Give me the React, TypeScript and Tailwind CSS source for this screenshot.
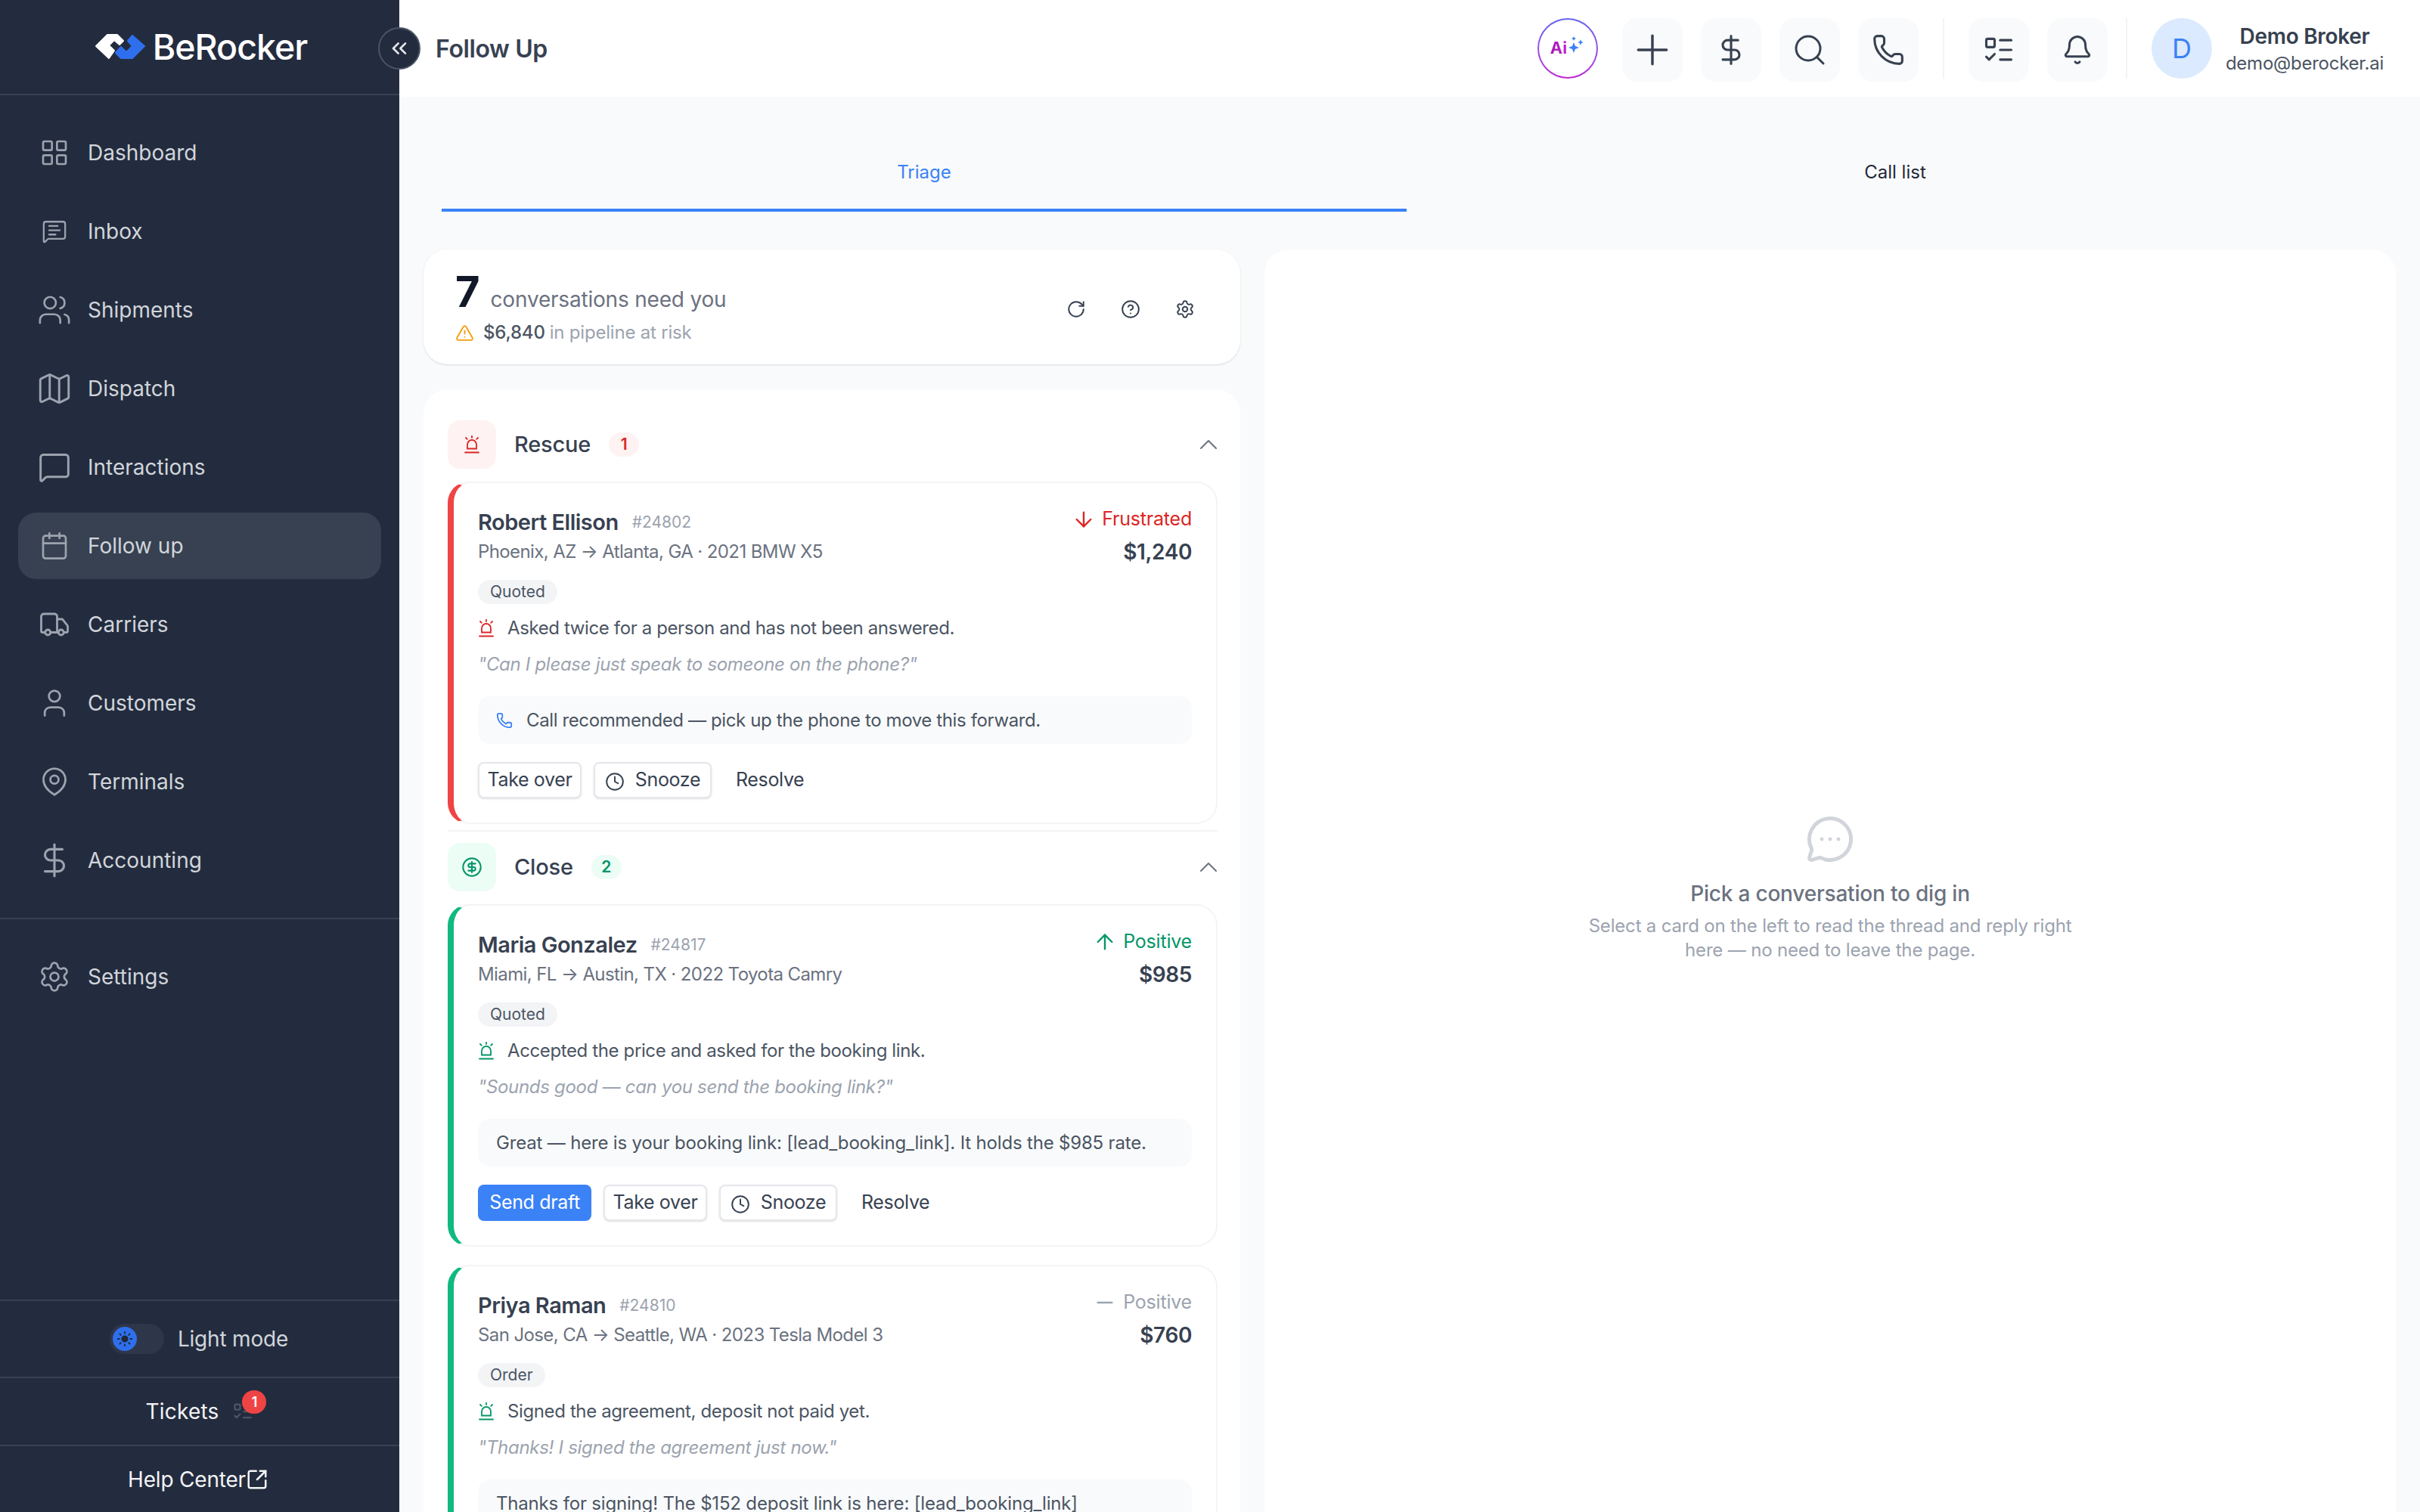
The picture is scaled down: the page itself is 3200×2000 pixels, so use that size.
import {
  AlertTriangle, ArrowDown, ArrowUp, Bell, Calendar, ChevronUp, ChevronsLeft, CircleDollarSign, CircleHelp, Clock,
  DollarSign, LayoutGrid, ListTodo, Map, MessageCircleMore, MessageSquare, MessageSquareText, Minus, Phone,
  Plus, RotateCw, Search, Settings, SquareArrowOutUpRight, Sun, Truck, User, Users,
} from 'lucide-react';

const PinIcon = ({ size }: { size: number; strokeWidth?: number; className?: string }) => (
  <svg width={size} height={size} viewBox="0 0 40 44" fill="none" stroke="currentColor" strokeWidth="3" className="text-[#9ca3af]">
    <path d="M20 41 C15 38 4 30 4 19 A16 16 0 0 1 36 19 C36 30 25 38 20 41 Z" strokeLinejoin="round" />
    <circle cx="20" cy="19" r="6" />
  </svg>
);

const navItems = [
  { label: 'Dashboard', icon: LayoutGrid, size: 40, sw: 1.6 },
  { label: 'Inbox', icon: MessageSquareText, size: 34, sw: 1.6 },
  { label: 'Shipments', icon: Users, size: 46, sw: 1.4 },
  { label: 'Dispatch', icon: Map, size: 50, sw: 1.4 },
  { label: 'Interactions', icon: MessageSquare, size: 44, sw: 1.6 },
  { label: 'Follow up', icon: Calendar, size: 40, sw: 1.6, active: true },
  { label: 'Carriers', icon: Truck, size: 42, sw: 1.6 },
  { label: 'Customers', icon: User, size: 44, sw: 1.5 },
  { label: 'Terminals', icon: PinIcon, size: 40, sw: 1.5 },
  { label: 'Accounting', icon: DollarSign, size: 50, sw: 1.5 },
];

const SirenIcon = ({ className }: { className: string }) => (
  <svg width="20" height="24" viewBox="0 0 20 24" fill="none" stroke="currentColor" strokeWidth="1.8" strokeLinecap="round" className={className}>
    <path d="M10 0.8 V3" />
    <path d="M2 3 L3.8 4.8" />
    <path d="M18 3 L16.2 4.8" />
    <path d="M4 17.5 V12 a6 6 0 0 1 12 0 V17.5 Z" />
    <path d="M1 22.5 H19" />
  </svg>
);

const Logo = () => (
  <svg width="84" height="52" viewBox="0 0 84 52">
    <path d="M9 25 L24 10 H37 L45 18 L40 23 L33 17 L26 24 L33 31 L26 41 Z" fill="#fff" stroke="#fff" strokeWidth="2" strokeLinejoin="round" />
    <path d="M35 34 L42 26 L49 33 L57 25 L51 18 L57 11 L73 25 L57 41 H42 Z" fill="#2f6fed" stroke="#2f6fed" strokeWidth="2" strokeLinejoin="round" />
  </svg>
);

const Sidebar = () => (
  <aside className="relative flex h-full w-[528px] shrink-0 flex-col bg-[#232c3e]">
    <div className="flex h-[126px] items-center justify-center border-b-2 border-[#374151] pr-1">
      <Logo />
      <span className="mt-[2px] text-[46.5px] font-medium tracking-[-1px] text-white">BeRocker</span>
    </div>
    <nav className="flex flex-col gap-4 px-6 pt-8 pb-8">
      {navItems.map((item) => (
        <div key={item.label} className={`flex h-[88px] items-center gap-6 rounded-3xl pl-7 ${item.active ? 'bg-[#374151]' : ''}`}>
          <span className="flex w-10 justify-center">
            <item.icon size={item.size} strokeWidth={item.sw} className="shrink-0 text-[#9ca3af]" />
          </span>
          <span className="text-[28px] text-[#d1d5db]">{item.label}</span>
        </div>
      ))}
    </nav>
    <div className="border-t-2 border-[#374151] px-6 pt-8">
      <div className="flex h-[88px] items-center gap-6 pl-7">
        <span className="flex w-10 justify-center">
          <Settings size={44} strokeWidth={1.5} className="shrink-0 text-[#9ca3af]" />
        </span>
        <span className="text-[28px] text-[#d1d5db]">Settings</span>
      </div>
    </div>
    <div className="mt-auto text-[28px]">
      <div className="flex h-[102px] items-center justify-center gap-[18px] border-t-2 border-[#374151] pr-[2px]">
        <div className="flex h-10 w-[72px] items-center rounded-full bg-[#2e3749] px-1">
          <span className="flex h-8 w-8 items-center justify-center rounded-full bg-[#2f6fed]">
            <Sun size={22} className="fill-[#1f2937] text-[#1f2937]" />
          </span>
        </div>
        <span className="tracking-[-0.2px] text-[#d1d5db]">Light mode</span>
      </div>
      <div className="flex h-[90px] items-center justify-center gap-[18px] border-t-2 border-[#374151]">
        <span className="tracking-[0.2px] text-[#f3f4f6]">Tickets</span>
        <span className="relative">
          <ListTodo size={28} className="text-[#4b5563]" />
          <span className="absolute -top-[14px] left-[13px] flex h-[31px] w-[32px] items-center justify-center rounded-full bg-[#ef4444] text-[18px] font-semibold text-white">1</span>
        </span>
      </div>
      <div className="flex h-[89px] items-center justify-center border-t-2 border-[#374151] pr-1">
        <span className="tracking-[-0.2px] text-[#f3f4f6]">Help Center</span>
        <SquareArrowOutUpRight size={30} className="text-[#f3f4f6]" />
      </div>
    </div>
  </aside>
);

const IconButton = ({ icon: Icon, size = 44, sw = 1.7 }: { icon: typeof Plus; size?: number; sw?: number }) => (
  <div className="flex h-[84px] w-20 items-center justify-center rounded-[20px] bg-[#f9fafb]">
    <Icon size={size} className="text-[#374151]" strokeWidth={sw} />
  </div>
);

const AiButton = () => (
  <div className="h-20 w-20 rounded-full bg-gradient-to-b from-[#6366f1] to-[#c026d3] p-[2px]">
    <div className="flex h-full w-full items-center justify-center rounded-full bg-white pb-[2px]">
      <span className="bg-gradient-to-r from-[#a21caf] to-[#c026d3] bg-clip-text text-[22px] font-bold text-transparent">Ai</span>
      <svg width="24" height="26" viewBox="0 0 24 26" className="-mt-2 fill-[#3b82f6]">
        <path d="M9 10 L11 15 L16 17 L11 19 L9 24 L7 19 L2 17 L7 15 Z" />
        <path d="M18 6 L19.2 9 L22 10 L19.2 11 L18 14 L16.8 11 L14 10 L16.8 9 Z" />
        <path d="M9 2 L10 4 L12 5 L10 6 L9 8 L8 6 L6 5 L8 4 Z" />
      </svg>
    </div>
  </div>
);

const Header = () => (
  <header className="flex h-[128px] shrink-0 items-start bg-white pt-6 pr-12">
    <h1 className="mt-[17px] ml-12 text-[32px] font-semibold tracking-[-0.4px] text-[#374151]">Follow Up</h1>
    <div className="ml-auto flex items-start">
      <AiButton />
      <div className="ml-8 flex gap-6">
        <IconButton icon={Plus} size={64} sw={1.3} />
        <IconButton icon={DollarSign} />
        <IconButton icon={Search} size={48} sw={1.5} />
        <IconButton icon={Phone} />
      </div>
      <div className="mx-8 h-20 w-[2px] bg-[#f3f4f6]" />
      <div className="flex gap-6">
        <IconButton icon={ListTodo} />
        <IconButton icon={Bell} size={42} />
      </div>
      <div className="mr-8 ml-6 h-20 w-[2px] bg-[#f3f4f6]" />
      <div className="flex h-20 w-20 items-center justify-center rounded-full bg-[#dbeafe] text-[36px] text-[#3b82f6]">D</div>
      <div className="ml-[18px] flex flex-col items-center">
        <span className="text-[28px] leading-[48px] font-semibold tracking-[-0.3px] text-[#374151]">Demo Broker</span>
        <span className="-mt-[6px] text-[24px] leading-[36px] tracking-[-0.25px] text-[#4b5563]">demo@berocker.ai</span>
      </div>
    </div>
  </header>
);

type CardProps = {
  accent: 'red' | 'green';
  name: string;
  id: string;
  route: string;
  mood: 'down' | 'up' | 'flat';
  moodLabel: string;
  price: string;
  stage: string;
  reason: string;
  quote: string;
  note: string;
  noteIcon?: boolean;
  draft?: boolean;
};

const Card = (c: CardProps) => (
  <div className={`rounded-[28px] border-2 border-l-8 border-[#f3f4f6] bg-white px-8 pt-[32px] pb-8 ${c.accent === 'red' ? 'border-l-[#ef4444]' : 'border-l-[#10b981]'}`}>
    <div className="flex justify-between">
      <div>
        <div className="flex h-10 items-center gap-[18px]">
          <span className="text-[29px] font-semibold tracking-[-0.5px] text-[#374151]">{c.name}</span>
          <span className="text-[21px] text-[#9ca3af]">{c.id}</span>
        </div>
        <div className="-mt-[1px] h-10 text-[24px] leading-10 tracking-[-0.6px] text-[#6b7280]">{c.route}</div>
      </div>
      <div className="flex flex-col items-end">
        <div className={`-mt-[4px] flex h-10 items-center gap-2 text-[25px] tracking-[-0.2px] ${c.mood === 'down' ? 'text-[#dc2626]' : c.mood === 'up' ? 'text-[#059669]' : 'text-[#9ca3af]'}`}>
          {c.mood === 'down' && <ArrowDown size={32} strokeWidth={1.8} />}
          {c.mood === 'up' && <ArrowUp size={32} strokeWidth={1.8} />}
          {c.mood === 'flat' && <Minus size={32} strokeWidth={1.8} />}
          {c.moodLabel}
        </div>
        <div className="mt-[3px] text-[28px] leading-10 font-semibold tracking-[-0.4px] text-[#374151]">{c.price}</div>
      </div>
    </div>
    <div className="mt-[17px] flex">
      <span className="flex h-8 items-center rounded-full bg-[#f3f4f6] px-4 text-[21px] text-[#4b5563]">{c.stage}</span>
    </div>
    <div className="mt-[12px] flex h-10 items-center gap-[18px] text-[24px] tracking-[-0.38px] text-[#4b5563]">
      <SirenIcon className={`ml-[1px] ${c.accent === 'red' ? 'text-[#dc2626]' : 'text-[#059669]'}`} />
      {c.reason}
    </div>
    <div className="mt-2 h-10 text-[24px] leading-10 tracking-[-0.3px] text-[#9ca3af] italic">{c.quote}</div>
    <div className={`mt-[22px] flex h-[63px] items-center gap-[18px] rounded-2xl bg-[#f9fafb] px-6 text-[24px] whitespace-nowrap text-[#4b5563] ${c.noteIcon ? 'tracking-[-0.38px]' : 'tracking-[-0.18px]'}`}>
      {c.noteIcon && <Phone size={22} className="text-[#3b82f6]" />}
      {c.note}
    </div>
    <div className="mt-6 flex h-12 items-center gap-4 text-[25px] tracking-[-0.35px] text-[#374151]">
      {c.draft && <span className="flex h-12 w-[150px] items-center justify-center rounded-lg bg-[#3b82f6] text-white">Send draft</span>}
      <span className="flex h-12 w-[137px] items-center justify-center rounded-lg border-2 border-[#e5e7eb] bg-white shadow-sm">Take over</span>
      <span className="flex h-12 w-[156px] items-center justify-center gap-[14px] rounded-lg border-2 border-[#e5e7eb] bg-white shadow-sm">
        <Clock size={26} strokeWidth={1.8} className="mt-1" />
        Snooze
      </span>
      <span className="ml-4">Resolve</span>
    </div>
  </div>
);

const GroupHeader = ({ label, count, accent }: { label: string; count: number; accent: 'red' | 'green' }) => (
  <div className="flex h-16 items-center">
    <div className={`flex h-16 w-16 items-center justify-center rounded-2xl ${accent === 'red' ? 'bg-[#fef2f2]' : 'bg-[#ecfdf5]'}`}>
      {accent === 'red' ? <SirenIcon className="text-[#dc2626]" /> : <CircleDollarSign size={28} strokeWidth={1.8} className="text-[#059669]" />}
    </div>
    <span className="ml-6 text-[29px] font-medium tracking-[-0.2px] text-[#374151]">{label}</span>
    <span className={`ml-6 flex h-8 w-10 items-center justify-center rounded-full text-[21px] font-semibold ${accent === 'red' ? 'bg-[#fef2f2] text-[#dc2626]' : 'bg-[#ecfdf5] text-[#059669]'}`}>{count}</span>
    <ChevronUp size={40} strokeWidth={1.2} className="-mr-2 ml-auto text-[#6b7280]" />
  </div>
);

const LeftColumn = () => (
  <div className="flex w-[1080px] shrink-0 flex-col gap-[33px]">
    <div className="flex h-[152px] items-center justify-between rounded-[32px] bg-white pr-[49px] pl-[42px] shadow-sm">
      <div>
        <div className="flex items-baseline gap-[14px]">
          <span className="text-[56px] leading-[64px] font-bold text-[#111827]">7</span>
          <span className="text-[28px] tracking-[-0.2px] text-[#6b7280]">conversations need you</span>
        </div>
        <div className="mt-1 flex items-center gap-3 text-[24px] tracking-[-0.2px]">
          <AlertTriangle size={25} strokeWidth={1.8} className="text-[#f59e0b]" />
          <span className="font-medium text-[#4b5563]">$6,840</span>
          <span className="-ml-[6px] text-[#9ca3af]">in pipeline at risk</span>
        </div>
      </div>
      <div className="flex gap-6 pt-[6px] text-[#374151]">
        <span className="flex w-12 justify-center"><RotateCw size={26} strokeWidth={1.8} /></span>
        <span className="flex w-12 justify-center"><CircleHelp size={26} strokeWidth={1.8} /></span>
        <span className="flex w-12 justify-center"><Settings size={26} strokeWidth={1.8} /></span>
      </div>
    </div>
    <div className="rounded-t-[32px] bg-white pt-[41px] pr-[30px] pl-8">
      <GroupHeader label="Rescue" count={1} accent="red" />
      <div className="mt-[17px]">
        <Card
          accent="red"
          name="Robert Ellison"
          id="#24802"
          route="Phoenix, AZ → Atlanta, GA · 2021 BMW X5"
          mood="down"
          moodLabel="Frustrated"
          price="$1,240"
          stage="Quoted"
          reason="Asked twice for a person and has not been answered."
          quote={'"Can I please just speak to someone on the phone?"'}
          note="Call recommended — pick up the phone to move this forward."
          noteIcon
        />
      </div>
      <div className="mt-2 h-[2px] bg-[#f3f4f6]" />
      <div className="mt-[15px]">
        <GroupHeader label="Close" count={2} accent="green" />
      </div>
      <div className="mt-[17px] flex flex-col gap-6">
        <Card
          accent="green"
          name="Maria Gonzalez"
          id="#24817"
          route="Miami, FL → Austin, TX · 2022 Toyota Camry"
          mood="up"
          moodLabel="Positive"
          price="$985"
          stage="Quoted"
          reason="Accepted the price and asked for the booking link."
          quote={'"Sounds good — can you send the booking link?"'}
          note="Great — here is your booking link: [lead_booking_link]. It holds the $985 rate."
          draft
        />
        <Card
          accent="green"
          name="Priya Raman"
          id="#24810"
          route="San Jose, CA → Seattle, WA · 2023 Tesla Model 3"
          mood="flat"
          moodLabel="Positive"
          price="$760"
          stage="Order"
          reason="Signed the agreement, deposit not paid yet."
          quote={'"Thanks! I signed the agreement just now."'}
          note="Thanks for signing! The $152 deposit link is here: [lead_booking_link]"
          draft
        />
      </div>
    </div>
  </div>
);

const EmptyPanel = () => (
  <div className="flex h-[1690px] flex-1 flex-col items-center justify-center rounded-t-[32px] bg-white text-center">
    <MessageCircleMore size={66} strokeWidth={1.8} className="text-[#d1d5db]" />
    <div className="mt-[18px] text-[28px] font-medium tracking-[-0.2px] text-[#6b7280]">Pick a conversation to dig in</div>
    <div className="mt-[6px] w-[680px] text-[24px] leading-8 tracking-[-0.18px] text-[#9ca3af]">
      Select a card on the left to read the thread and reply right here — no need to leave the page.
    </div>
  </div>
);

export default function App() {
  return (
    <div className="relative flex h-screen w-screen overflow-hidden bg-[#f9fafb] font-['Inter',sans-serif]">
      <Sidebar />
      <button className="absolute top-9 left-[500px] flex h-14 w-14 items-center justify-center rounded-full border-2 border-[#4b5563] bg-[#232c3e] text-[#e5e7eb]">
        <ChevronsLeft size={32} />
      </button>
      <main className="flex min-w-0 flex-1 flex-col">
        <Header />
        <div className="mx-14 mt-12 grid h-[104px] shrink-0 grid-cols-2 gap-2 text-[24px]">
          <div className="flex items-center justify-center border-b-4 border-[#3b82f6] pt-1 text-[#3b82f6]">Triage</div>
          <div className="flex items-center justify-center text-[#1f2937]">Call list</div>
        </div>
        <div className="mt-[50px] flex gap-8 pr-8 pl-8">
          <LeftColumn />
          <EmptyPanel />
        </div>
      </main>
    </div>
  );
}
